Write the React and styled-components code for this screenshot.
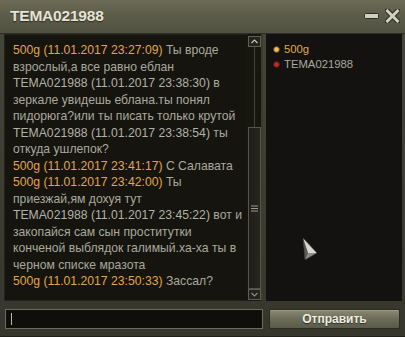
import React from "react";
import styled, { createGlobalStyle } from "styled-components";

const Global = createGlobalStyle`
  html, body { margin: 0; padding: 0; background: #3d3d32; }
  body { width: 405px; height: 337px; overflow: hidden; }
  * { box-sizing: border-box; }
`;

const Window = styled.div`
  position: relative;
  width: 405px;
  height: 337px;
  display: flex;
  flex-direction: column;
  background: linear-gradient(#47473b, #3c3c31 60%, #36362c);
  font-family: "Liberation Sans", Arial, sans-serif;
  overflow: hidden;
`;

const TitleBar = styled.div`
  height: 34px;
  flex: none;
  display: flex;
  align-items: center;
  padding: 0 5px 2px 10px;
  background: linear-gradient(180deg, #6b6b56 0%, #5e5e4b 40%, #515141 100%);
  border-bottom: 1px solid #2e2e25;
`;

const Title = styled.div`
  flex: 1;
  color: #e6e4d6;
  font-weight: bold;
  font-size: 15.5px;
  letter-spacing: -0.2px;
  text-shadow: 0 1px 1px rgba(0, 0, 0, 0.5);
`;

const TitleButton = styled.div`
  width: 16px;
  height: 16px;
  display: flex;
  align-items: center;
  justify-content: center;
  margin-left: ${(p) => p.$gap || 0}px;
`;

const Body = styled.div`
  flex: 1;
  display: flex;
  gap: 3px;
  padding: 0 3px 0 4px;
  min-height: 0;
`;

const ChatPanel = styled.div`
  width: 259px;
  display: flex;
  background: #15140f;
  box-shadow: inset 0 0 0 1px #23221b;
`;

const Messages = styled.div`
  flex: 1;
  padding: 8px 0 0 9px;
  font-size: 12.2px;
  line-height: 16.5px;
  white-space: pre;
  overflow: hidden;
`;

const Line = styled.div`
  color: #aaa99c;
`;

const Author = styled.span`
  color: ${(p) => (p.$gold ? "#e0a650" : "#b3b2a5")};
`;

const ScrollBar = styled.div`
  width: 16px;
  flex: none;
  display: flex;
  flex-direction: column;
  align-items: center;
  padding: 2px 0 1px 1px;
  background: #17160f;
  border-right: 2px solid #3b3b30;
`;

const ArrowButton = styled.div`
  width: 13px;
  height: 11px;
  flex: none;
  border: 1px solid #5e5e52;
  background: #24231c;
  display: flex;
  align-items: center;
  justify-content: center;
`;

const Track = styled.div`
  flex: ${(p) => p.$grow};
  width: 1px;
  background: #44443a;
`;

const Thumb = styled.div`
  height: 162px;
  flex: none;
  width: 13px;
  border: 1px solid #55554a;
  background: linear-gradient(90deg, #1f1e18, #26251e);
  display: flex;
  align-items: center;
  justify-content: center;
`;

const UsersPanel = styled.div`
  flex: 1;
  background: #131210;
  padding: 8px 0 0 7px;
  font-size: 11.3px;
  line-height: 14px;
`;

const User = styled.div`
  display: flex;
  align-items: center;
  gap: 4px;
  color: ${(p) => (p.$gold ? "#e0a650" : "#a9a89c")};
  margin-bottom: 1px;
`;

const Dot = styled.span`
  width: 7px;
  height: 7px;
  border-radius: 50%;
  background: radial-gradient(circle, ${(p) => p.$c} 0%, ${(p) => p.$c} 35%, rgba(0,0,0,0) 75%);
`;

const Footer = styled.div`
  height: 36px;
  flex: none;
  display: flex;
  align-items: center;
  gap: 6px;
  padding: 2px 5px 2px 5px;
  border-bottom: 1px solid #202019;
`;

const Input = styled.div`
  width: 258px;
  height: 20px;
  border: 1px solid #6b6b5e;
  background: #0f0e0b;
  display: flex;
  align-items: center;
  padding-left: 5px;
`;

const Caret = styled.div`
  width: 1px;
  height: 12px;
  background: #b8b8ac;
`;

const SendButton = styled.div`
  flex: 1;
  height: 20px;
  border: 1px solid #2b2b22;
  border-radius: 2px;
  background: linear-gradient(180deg, #8b8b73 0%, #6e6e5a 45%, #5a5a49 100%);
  box-shadow: inset 0 1px 0 rgba(255,255,255,0.15);
  color: #f0eee2;
  font-weight: bold;
  font-size: 12px;
  display: flex;
  align-items: center;
  justify-content: center;
  text-shadow: 0 1px 1px rgba(0,0,0,0.6);
`;

const Cursor = styled.svg`
  position: absolute;
  left: 301px;
  top: 236px;
`;

const messages = [
  { gold: true, author: "500g (11.01.2017 23:27:09)", lines: [" Ты вроде", "взрослый,а все равно еблан"] },
  { gold: false, author: "TEMA021988 (11.01.2017 23:38:30)", lines: [" в", "зеркале увидешь еблана.ты понял", "пидорюга?или ты писать только крутой"] },
  { gold: false, author: "TEMA021988 (11.01.2017 23:38:54)", lines: [" ты", "откуда ушлепок?"] },
  { gold: true, author: "500g (11.01.2017 23:41:17)", lines: [" С Салавата"] },
  { gold: true, author: "500g (11.01.2017 23:42:00)", lines: [" Ты", "приезжай,ям дохуя тут"] },
  { gold: false, author: "TEMA021988 (11.01.2017 23:45:22)", lines: [" вот и", "закопайся сам сын проститутки", "конченой выблядок галимый.ха-ха ты в", "черном списке мразота"] },
  { gold: true, author: "500g (11.01.2017 23:50:33)", lines: [" Зассал?"] },
];

export default function App() {
  return (
    <Window>
      <Global />
      <TitleBar>
        <Title>TEMA021988</Title>
        <TitleButton>
          <svg width="15" height="6" viewBox="0 0 15 6">
            <rect x="0.5" y="0.5" width="14" height="5" rx="1" fill="#cfcfc2" stroke="#2c2c22" />
          </svg>
        </TitleButton>
        <TitleButton $gap={5}>
          <svg width="15" height="14" viewBox="0 0 15 14">
            <path d="M2 1.5 L13 12.5 M13 1.5 L2 12.5" stroke="#2c2c22" strokeWidth="5" strokeLinecap="square" />
            <path d="M2.5 2 L12.5 12 M12.5 2 L2.5 12" stroke="#cfcfc2" strokeWidth="3" strokeLinecap="square" />
          </svg>
        </TitleButton>
      </TitleBar>
      <Body>
        <ChatPanel>
          <Messages>
            {messages.map((m, i) => (
              <React.Fragment key={i}>
                <Line>
                  <Author $gold={m.gold}>{m.author}</Author>
                  <span>{m.lines[0]}</span>
                </Line>
                {m.lines.slice(1).map((l, j) => (
                  <Line key={j}>{l}</Line>
                ))}
              </React.Fragment>
            ))}
          </Messages>
          <ScrollBar>
            <ArrowButton>
              <svg width="7" height="5" viewBox="0 0 7 5">
                <path d="M0.5 4 L3.5 1 L6.5 4" fill="none" stroke="#c4c4b8" strokeWidth="1.2" />
              </svg>
            </ArrowButton>
            <Track $grow={1} />
            <Thumb>
              <svg width="7" height="7" viewBox="0 0 7 7">
                <path d="M0 1 H7 M0 3.5 H7 M0 6 H7" stroke="#9c9c90" strokeWidth="1" />
              </svg>
            </Thumb>
            <ArrowButton>
              <svg width="7" height="5" viewBox="0 0 7 5">
                <path d="M0.5 1 L3.5 4 L6.5 1" fill="none" stroke="#8a8a7e" strokeWidth="1.2" />
              </svg>
            </ArrowButton>
          </ScrollBar>
        </ChatPanel>
        <UsersPanel>
          <User $gold>
            <Dot $c="#f0c050" />
            500g
          </User>
          <User>
            <Dot $c="#c02828" />
            TEMA021988
          </User>
        </UsersPanel>
      </Body>
      <Footer>
        <Input>
          <Caret />
        </Input>
        <SendButton>Отправить</SendButton>
      </Footer>
      <Cursor width="18" height="26" viewBox="0 0 18 26">
        <polygon points="2,2 16,17 4,24" fill="#8c8c86" />
        <polygon points="2,2 16,17 7,17" fill="#d8d8d2" />
        <polygon points="2,2 7,17 4,24" fill="#5a5a56" />
        <polygon points="2,2 16,17 4,24" fill="none" stroke="#2a2a26" strokeWidth="0.6" />
      </Cursor>
    </Window>
  );
}
